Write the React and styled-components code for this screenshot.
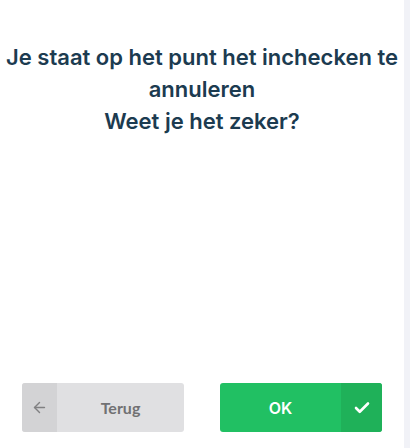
import styled, { createGlobalStyle } from "styled-components";
import { ArrowLeft, Check } from "lucide-react";

const GlobalStyle = createGlobalStyle`
  html, body {
    margin: 0;
    padding: 0;
    background: #ffffff;
  }
  body {
    font-family: Inter, "Open Sans", "Liberation Sans", sans-serif;
  }
`;

function App() {
  return (
    <>
      <GlobalStyle />
      <Screen>
        <Main>
          <Message>
            Je staat op het punt het inchecken te annuleren
            <br />
            Weet je het zeker?
          </Message>

          <Actions>
            <ActionButton $variant="secondary">
              <ButtonIcon $variant="secondary" $side="left">
                <ArrowLeft size={17} strokeWidth={2} />
              </ButtonIcon>
              <ButtonLabel $variant="secondary">Terug</ButtonLabel>
            </ActionButton>

            <ActionButton $variant="primary">
              <ButtonLabel $variant="primary">OK</ButtonLabel>
              <ButtonIcon $variant="primary" $side="right">
                <Check size={18} strokeWidth={3.5} />
              </ButtonIcon>
            </ActionButton>
          </Actions>
        </Main>
        <Rail />
      </Screen>
    </>
  );
}

const variants = {
  secondary: {
    bg: "#e0e0e2",
    iconBg: "#d3d3d5",
    text: "#717173",
    icon: "#808082",
  },
  primary: {
    bg: "#21c063",
    iconBg: "#1fb159",
    text: "#ffffff",
    icon: "#ffffff",
  },
};

const Screen = styled.div`
  display: flex;
  height: 448px;
`;

const Main = styled.main`
  flex: 1;
  display: flex;
  flex-direction: column;
  padding: 41px 0 16px;
`;

const Rail = styled.div`
  width: 6px;
  background: #f1f2f7;
`;

const Message = styled.h2`
  margin: 0;
  padding: 0 2px;
  text-align: center;
  font-size: 22px;
  line-height: 32px;
  font-weight: 600;
  color: #1c3b50;
`;

const Actions = styled.div`
  margin-top: auto;
  display: grid;
  grid-template-columns: 1fr 1fr;
  gap: 36px;
  padding: 0 22px;
`;

const ActionButton = styled.button`
  display: flex;
  align-items: stretch;
  height: 49px;
  padding: 0;
  border: none;
  border-radius: 3px;
  overflow: hidden;
  cursor: pointer;
  background: ${({ $variant }) => variants[$variant].bg};
`;

const ButtonIcon = styled.span`
  flex-shrink: 0;
  display: flex;
  align-items: center;
  justify-content: center;
  width: ${({ $side }) => ($side === "left" ? "35px" : "41px")};
  color: ${({ $variant }) => variants[$variant].icon};
  background: ${({ $variant }) => variants[$variant].iconBg};
`;

const ButtonLabel = styled.span`
  flex: 1;
  display: flex;
  align-items: center;
  justify-content: center;
  font-family: ${({ $variant }) =>
    $variant === "primary"
      ? 'Inter, "Open Sans", sans-serif'
      : 'Lato, "Liberation Sans", sans-serif'};
  font-size: 16px;
  font-weight: ${({ $variant }) => ($variant === "primary" ? 600 : 700)};
  color: ${({ $variant }) => variants[$variant].text};
`;

export default App;
